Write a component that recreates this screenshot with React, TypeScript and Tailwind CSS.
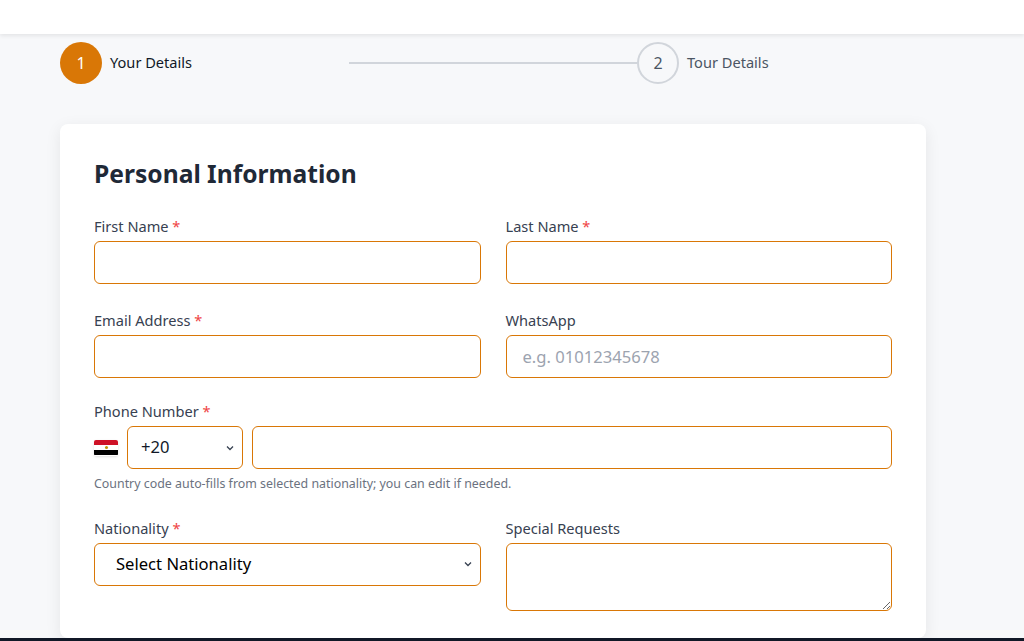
const Label = ({ text, req }: { text: string; req?: boolean }) => (
  <label className="block text-[14.6px] text-[#374151] mb-[5px] leading-[20px]">
    {text}
    {req && <span className="text-[#ef4444]"> *</span>}
  </label>
);

const inputCls =
  'block w-full h-[43px] rounded-[6px] border border-[#d97706] bg-white px-4 text-[16.6px] text-[#111827] placeholder:text-[#9ca3af] outline-none';

const Chevron = () => (
  <svg className="absolute right-[8px] top-1/2 -translate-y-1/2 w-[10px] h-[10px]" viewBox="0 0 10 10" fill="none" stroke="#374151" strokeWidth="1.3">
    <path d="M2 3.5l3 3 3-3" />
  </svg>
);

export default function App() {
  return (
    <div className="h-[641px] overflow-hidden bg-[#f7f8fa] font-['Open_Sans',sans-serif] flex flex-col">
      <div className="h-[34px] bg-white shadow-[0_2px_4px_rgba(0,0,0,0.08)] shrink-0" />
      <div className="pl-[60px] pt-[8px] flex items-center h-[42px] box-content">
        <div className="w-[42px] h-[42px] rounded-full bg-[#d97706] text-white flex items-center justify-center text-[16px]">1</div>
        <span className="ml-[8px] text-[14.6px] text-[#111827] w-[239px]">Your Details</span>
        <div className="w-[288px] h-[2px] bg-[#d1d5db]" />
        <div className="w-[42px] h-[42px] rounded-full border-2 border-[#d1d5db] text-[#4b5563] flex items-center justify-center text-[16px]">2</div>
        <span className="ml-[8px] text-[14.6px] text-[#4b5563]">Tour Details</span>
      </div>
      <div className="ml-[60px] mt-[40px] w-[866px] bg-white rounded-[8px] shadow-[0_4px_16px_rgba(0,0,0,0.08)] px-[34px] pt-[30px] flex-1">
        <h2 className="text-[24.6px] font-bold text-[#1f2937] leading-[40px] mb-[22px]">Personal Information</h2>
        <div className="grid grid-cols-2 gap-x-[25px] gap-y-[26px]">
          <div>
            <Label text="First Name" req />
            <input className={inputCls} />
          </div>
          <div>
            <Label text="Last Name" req />
            <input className={inputCls} />
          </div>
          <div>
            <Label text="Email Address" req />
            <input className={inputCls} />
          </div>
          <div>
            <Label text="WhatsApp" />
            <input className={inputCls} placeholder="e.g. 01012345678" />
          </div>
          <div className="col-span-2 -mt-[3px]">
            <Label text="Phone Number" req />
            <div className="flex items-center gap-[9px]">
              <span className="w-[24px] h-[16px] flex flex-col overflow-hidden rounded-[2px] shadow-sm">
                <span className="flex-1 bg-[#ce1126]" />
                <span className="flex-1 bg-white flex items-center justify-center"><span className="w-[3px] h-[3px] bg-[#c09300] rounded-full" /></span>
                <span className="flex-1 bg-black" />
              </span>
              <div className="relative w-[116px]">
                <div className={inputCls + ' flex items-center px-[13px]'}>+20</div>
                <Chevron />
              </div>
              <input className={inputCls + ' flex-1 w-auto'} />
            </div>
            <p className="text-[12.4px] text-[#6b7280] mt-[6px]">Country code auto-fills from selected nationality; you can edit if needed.</p>
          </div>
          <div className="-mt-[2px]">
            <Label text="Nationality" req />
            <div className="relative">
              <div className={inputCls + ' flex items-center px-[21px] text-black'}>Select Nationality</div>
              <Chevron />
            </div>
          </div>
          <div className="-mt-[2px]">
            <Label text="Special Requests" />
            <textarea className={inputCls + ' h-[68px] resize-y py-2'} />
          </div>
        </div>
      </div>
      <div className="h-[3px] bg-[#111827] shrink-0" />
    </div>
  );
}
